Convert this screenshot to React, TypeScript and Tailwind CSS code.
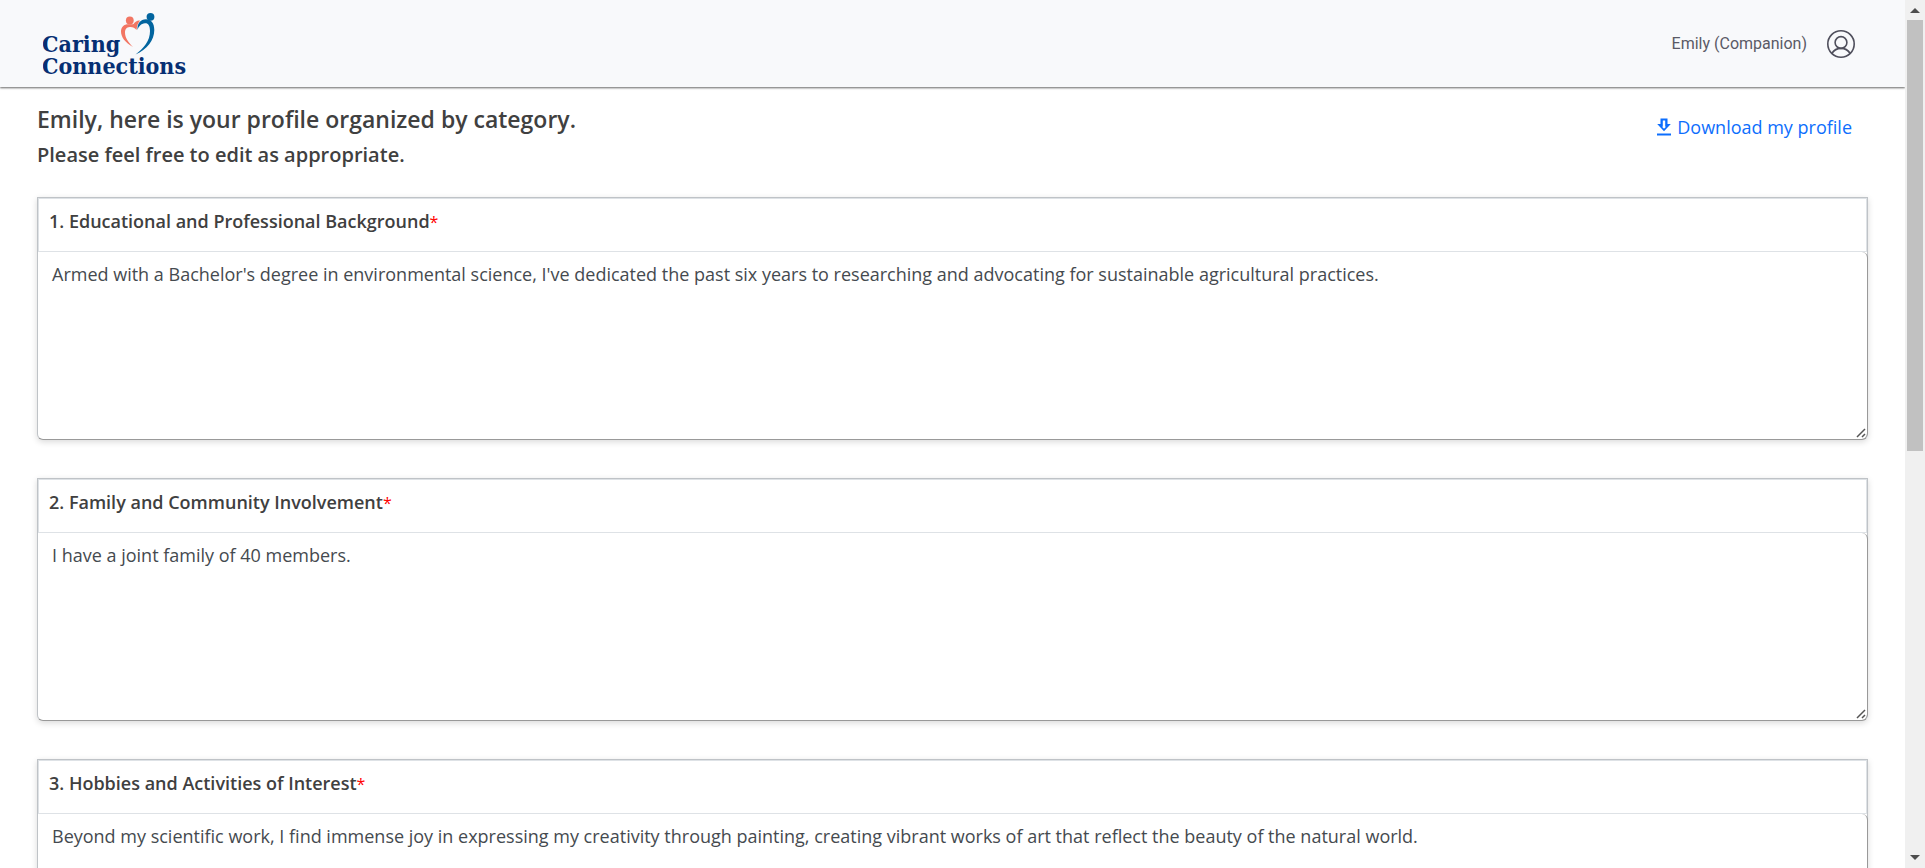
import React from "react";

type Category = { id: string; title: string; text: string };

const categories: Category[] = [
  {
    id: "education",
    title: "1. Educational and Professional Background",
    text: "Armed with a Bachelor's degree in environmental science, I've dedicated the past six years to researching and advocating for sustainable agricultural practices.",
  },
  {
    id: "family",
    title: "2. Family and Community Involvement",
    text: "I have a joint family of 40 members.",
  },
  {
    id: "hobbies",
    title: "3. Hobbies and Activities of Interest",
    text: "Beyond my scientific work, I find immense joy in expressing my creativity through painting, creating vibrant works of art that reflect the beauty of the natural world.",
  },
];

function Logo() {
  return (
    <svg width="146" height="68" viewBox="0 0 146 68" role="img" aria-label="Caring Connections">
      <g fill="#062f73" fontFamily='"DejaVu Serif Condensed", "DejaVu Serif", serif' fontWeight="700">
        <text x="-1" y="42" fontSize="23">Caring</text>
        <text x="-1" y="64" fontSize="23">Connections</text>
      </g>
      <g fill="#f27663">
        <circle cx="86.800" cy="10.500" r="3.900" />
        <path d="M90 37 C82 32.500 78 27 78 21.500 C78 16.500 81.500 13.800 86.500 14.300 C88.500 14.300 89.500 14.500 90.500 14 C92.500 11.500 95 10 97 10.800 C95 13 94 15.500 93.500 20 C92 18 89.500 16.800 86.800 17 C83.300 17.300 82 19.500 82 22.500 C82 27.500 85 32 90 37 Z" />
      </g>
      <g fill="#02659f">
        <circle cx="107.500" cy="6.800" r="3.900" />
        <path d="M92.500 44.500 C101 38 107 31 107 21 C107 15.500 105 13 102 13.300 C98 13.700 95.500 16.500 94.500 20 C94 13.500 97.500 9.300 103 9.300 C108.500 9.300 111.300 13.500 111.300 20 C111.300 30.500 104 39.500 92.500 44.500 Z" />
      </g>
    </svg>
  );
}

function UserIcon() {
  return (
    <svg width="30" height="30" viewBox="0 0 30 30" fill="none" stroke="#4f4f5c" strokeWidth="1.600" aria-hidden="true">
      <circle cx="15" cy="15" r="13.200" />
      <circle cx="15" cy="13.500" r="5.900" />
      <path d="M5.800 24.500 C8 21 11 19.400 15 19.400 C19 19.400 22 21 24.200 24.500" />
    </svg>
  );
}

function DownloadIcon() {
  return (
    <svg width="14" height="18" viewBox="0 0 14 18" aria-hidden="true">
      <path fill="#0d6efd" fillRule="evenodd" d="M3.500 0.500h7v5.500h3.300L7 13.300 0.200 6H3.500zM5.800 2.500v6.200H5l2 2 2-2H8.200v-6.200z" />
      <path fill="#0d6efd" d="M0 15.500h14v2H0z" />
    </svg>
  );
}

function CategoryCard({ id, title, text }: Category) {
  return (
    <section className="rounded-b-md border border-[#bfc3c7] border-b-[#999] bg-white shadow-[0_2px_6px_rgba(0,0,0,0.15)]">
      <div className="border border-[#dee2e6] px-2.5 pt-2 pb-4">
        <label htmlFor={id} className="block text-[18px] leading-7 font-semibold text-[#404040]">
          {title}
          <span className="text-[16px] leading-none font-normal text-[#ff0000]">*</span>
        </label>
      </div>
      <div className="relative -mr-px rounded-md border-r border-[#999]">
        <textarea
          id={id}
          defaultValue={text}
          className="block h-[187px] w-full resize-y rounded-md px-3.5 py-2 text-[18px] leading-7 text-[#454a4f] outline-none [&::-webkit-resizer]:bg-transparent"
        />
        <svg
          width="10"
          height="10"
          viewBox="0 0 10 10"
          className="pointer-events-none absolute right-px bottom-px"
          fill="none"
          stroke="#555"
          strokeWidth="1.500"
          aria-hidden="true"
        >
          <path d="M1 9 9 1M6 9 9 6" />
        </svg>
      </div>
    </section>
  );
}

function ScrollTrack() {
  return (
    <div className="flex w-5 shrink-0 flex-col items-center bg-[#f0f0f0]" aria-hidden="true">
      <svg width="20" height="20" viewBox="0 0 20 20">
        <path fill="#4d4d4d" d="M5 13h10L10 8z" />
      </svg>
      <div className="w-4 flex-1">
        <div className="h-[52%] bg-[#c1c1c1]" />
      </div>
      <svg width="20" height="20" viewBox="0 0 20 20">
        <path fill="#4d4d4d" d="M5 7h10L10 12z" />
      </svg>
    </div>
  );
}

export default function App() {
  return (
    <div className="flex h-screen bg-white font-['Open_Sans','Noto_Sans',sans-serif]">
      <div className="min-w-0 flex-1 overflow-y-auto [scrollbar-width:none]">
        <header className="flex h-[87px] items-center justify-between bg-[#f8f9fb] pr-[49px] pl-[43px] shadow-[0_1px_2px_rgba(0,0,0,0.6)]">
          <a href="#home">
            <Logo />
          </a>
          <button type="button" className="flex items-center gap-[19px] font-[Roboto,sans-serif] text-[16px] text-[#5a5a66]">
            Emily (Companion)
            <UserIcon />
          </button>
        </header>
        <main className="px-[37px] pt-[14px] pb-10">
          <div className="flex items-start justify-between pr-4">
            <div className="font-semibold text-[#404040]">
              <h1 className="text-[23px] leading-9">Emily, here is your profile organized by category.</h1>
              <p className="text-[20px] leading-9">Please feel free to edit as appropriate.</p>
            </div>
            <a href="#download" className="mt-3 flex items-center gap-1.5 text-[18px] leading-7 text-[#0d6efd]">
              <DownloadIcon />
              Download my profile
            </a>
          </div>
          <div className="mt-6 flex flex-col gap-[38px]">
            {categories.map((category) => (
              <CategoryCard key={category.id} {...category} />
            ))}
          </div>
        </main>
      </div>
      <ScrollTrack />
    </div>
  );
}
